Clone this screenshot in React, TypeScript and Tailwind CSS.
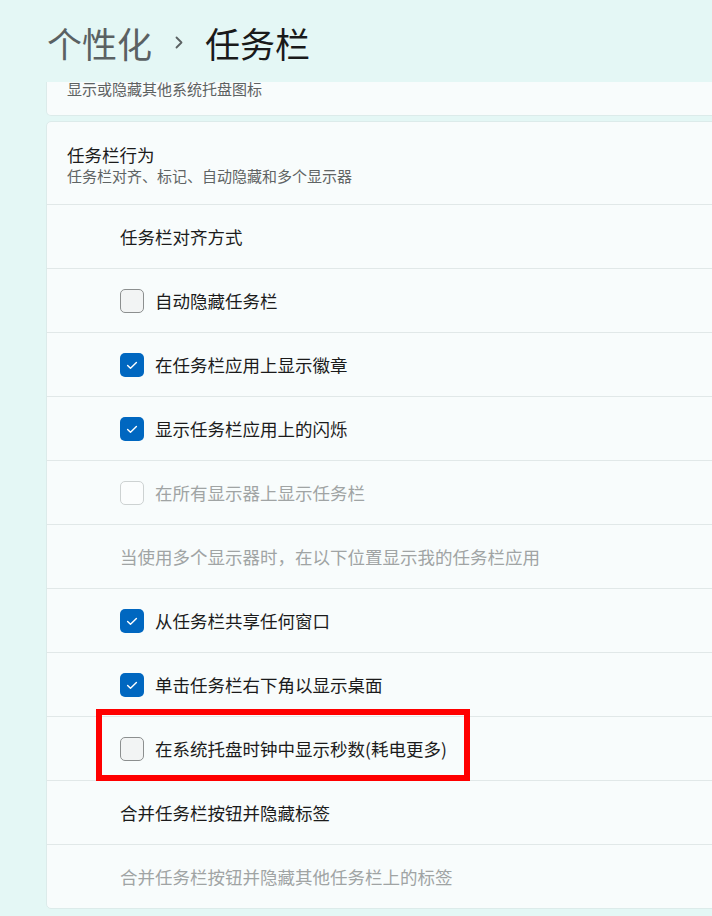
import React from "react";

type RowKind = "plain" | "checked" | "unchecked" | "disabled" | "gray";

const rows: { kind: RowKind; text: string }[] = [
  { kind: "plain", text: "任务栏对齐方式" },
  { kind: "unchecked", text: "自动隐藏任务栏" },
  { kind: "checked", text: "在任务栏应用上显示徽章" },
  { kind: "checked", text: "显示任务栏应用上的闪烁" },
  { kind: "disabled", text: "在所有显示器上显示任务栏" },
  { kind: "gray", text: "当使用多个显示器时，在以下位置显示我的任务栏应用" },
  { kind: "checked", text: "从任务栏共享任何窗口" },
  { kind: "checked", text: "单击任务栏右下角以显示桌面" },
  { kind: "unchecked", text: "在系统托盘时钟中显示秒数(耗电更多)" },
  { kind: "plain", text: "合并任务栏按钮并隐藏标签" },
  { kind: "gray", text: "合并任务栏按钮并隐藏其他任务栏上的标签" },
];

function Box({ kind }: { kind: RowKind }) {
  if (kind === "checked") {
    return (
      <div className="w-[24px] h-[24px] rounded-[5px] bg-[#0067c0] flex items-center justify-center shrink-0">
        <svg width="16" height="16" viewBox="0 0 16 16" fill="none">
          <path d="M3.6 8.4l2.9 2.9L12.4 5.4" stroke="#ffffff" strokeWidth="1.4" strokeLinecap="round" strokeLinejoin="round" />
        </svg>
      </div>
    );
  }
  if (kind === "unchecked") {
    return <div className="w-[24px] h-[24px] rounded-[5px] bg-[#f2f4f4] border border-[#8c8f8f] shrink-0" />;
  }
  return <div className="w-[24px] h-[24px] rounded-[5px] bg-[#fbfdfd] border border-[#cdd2d2] shrink-0" />;
}

export default function App() {
  return (
    <div
      className="relative w-[712px] h-[916px] overflow-hidden bg-[#e4f7f5]"
      style={{ fontFamily: '"Noto Sans CJK SC", "Noto Sans", sans-serif' }}
    >
      {/* Header */}
      <div className="h-[82px] pl-[47px] pt-[3px] flex items-center">
        <span className="text-[35px] leading-[40px] text-[#5a6163]">个性化</span>
        <span className="ml-[23px] mr-[22px] flex items-center">
          <svg width="8" height="13" viewBox="0 0 8 13" fill="none">
            <path d="M1.5 1.5l5 5-5 5" stroke="#5b6263" strokeWidth="1.8" strokeLinecap="round" strokeLinejoin="round" />
          </svg>
        </span>
        <span className="text-[35px] leading-[40px] text-[#1a1a1a]">任务栏</span>
      </div>

      {/* Top scrolled card */}
      <div className="ml-[46px] w-[700px] h-[34px] overflow-hidden rounded-b-[5px] bg-[#f8fcfc] border border-t-0 border-[#dcebea]">
        <div className="pl-[20px] -mt-[3px] text-[15px] leading-[20px] text-[#5d6262]">显示或隐藏其他系统托盘图标</div>
      </div>

      {/* Main card */}
      <div className="mt-[5px] ml-[46px] w-[700px] rounded-[5px] bg-[#f8fcfc] border border-[#dcebea]">
        <div className="pl-[20px] pt-[22px] pb-[18px]">
          <div className="text-[17.5px] leading-[22px] text-[#1b1b1b]">任务栏行为</div>
          <div className="text-[15px] leading-[20px] text-[#5f6464]">任务栏对齐、标记、自动隐藏和多个显示器</div>
        </div>
        {rows.map((r, i) => (
          <div key={i} className="h-[64px] border-t border-[#e1e8e8] pl-[73px] flex items-center gap-[11px]">
            {(r.kind === "checked" || r.kind === "unchecked" || r.kind === "disabled") && <Box kind={r.kind} />}
            <span
              className={
                "text-[17.5px] leading-[24px] " +
                (r.kind === "disabled" || r.kind === "gray" ? "text-[#a0a4a4]" : "text-[#1b1b1b]")
              }
            >
              {r.text}
            </span>
          </div>
        ))}
      </div>

      {/* Red highlight overlay */}
      <div className="absolute left-[96px] top-[709px] w-[374px] h-[72px] border-[6px] border-[#ff0000] pointer-events-none" />
    </div>
  );
}
